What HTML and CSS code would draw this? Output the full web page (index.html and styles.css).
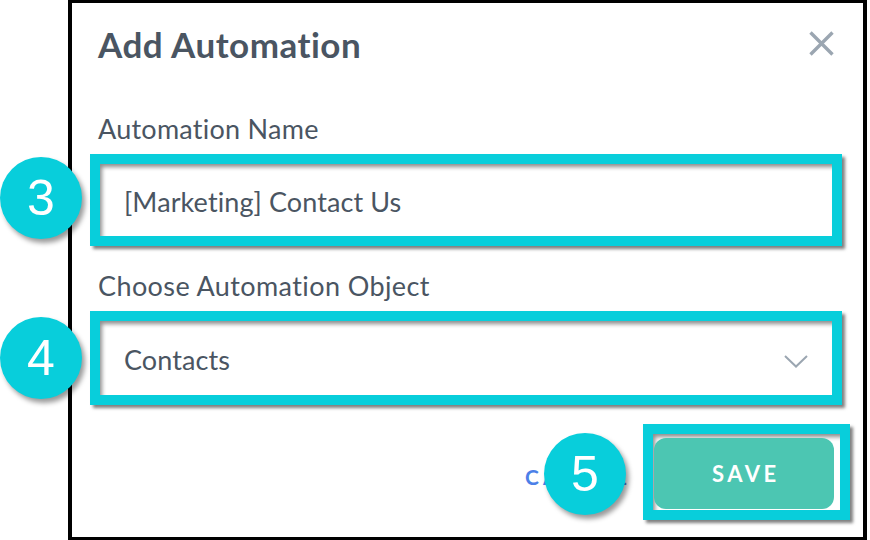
FILE: index.html
```html
<!DOCTYPE html>
<html>
<head>
<meta charset="utf-8">
<link rel="stylesheet" href="styles.css">
</head>
<body>
<div class="frame">
  <div class="head">
    <h1 class="title">Add Automation</h1>
    <svg class="close" width="25" height="25" viewBox="0 0 25 25"><path d="M1.5 1.5 L23.5 23.5 M23.5 1.5 L1.5 23.5" stroke="#9ba6b1" stroke-width="3.4" fill="none"/></svg>
  </div>
  <div class="label">Automation Name</div>
  <div class="hl hl-1"><div class="field">[Marketing] Contact Us</div></div>
  <div class="label label-2">Choose Automation Object</div>
  <div class="hl hl-2"><div class="field select"><span>Contacts</span><svg class="chev" width="24" height="13" viewBox="0 0 24 13"><path d="M1 1 L12 11.5 L23 1" stroke="#9ba6b1" stroke-width="2" fill="none"/></svg></div></div>
  <div class="footer">
    <span class="cancel">CANCEL</span>
    <div class="hl hl-save"><div class="save">SAVE</div></div>
  </div>
</div>
<div class="badge b3">3</div>
<div class="badge b4">4</div>
<div class="badge b5">5</div>
</body>
</html>
```
FILE: styles.css
```css
html, body {
  margin: 0;
  background: #fff;
}
body {
  width: 870px;
  height: 540px;
  overflow: hidden;
  position: relative;
  font-family: Lato, "Open Sans", sans-serif;
  color: #4a5562;
}
.frame {
  margin-left: 68px;
  width: 799px;
  height: 540px;
  box-sizing: border-box;
  border-style: solid;
  border-color: #000;
  border-width: 3px 4px;
  padding: 21px 21px 0 18px;
}
.head {
  display: flex;
  justify-content: space-between;
  align-items: flex-start;
  height: 40px;
  padding-left: 8px;
}
.title {
  margin: 0;
  font-size: 35px;
  line-height: 40px;
  font-weight: 700;
  letter-spacing: 0.5px;
  color: #4a5562;
}
.close {
  margin-top: 7px;
  margin-right: 8px;
}
.label {
  margin-top: 49px;
  padding-left: 8px;
  font-size: 27px;
  line-height: 32px;
  height: 32px;
  letter-spacing: 0.25px;
}
.label-2 {
  margin-top: 24px;
  letter-spacing: 0.4px;
}
.hl {
  margin-top: 9px;
  border: 10px solid #08cedb;
  background: #fff;
  box-shadow: 3px 3px 3px rgba(0, 0, 0, 0.5);
}
.field {
  height: 72px;
  box-sizing: border-box;
  padding: 22px 24px 0 24px;
  font-size: 27px;
  line-height: 32px;
  letter-spacing: 0.1px;
  box-shadow: inset 3px 4px 4px -1px rgba(0, 0, 0, 0.45);
}
.hl-2 .field {
  height: 74px;
  padding-top: 23px;
}
.select {
  display: flex;
  justify-content: space-between;
  align-items: flex-start;
}
.chev {
  margin-top: 11px;
}
.footer {
  margin-top: 19px;
  margin-right: -8px;
  display: flex;
  justify-content: flex-end;
  align-items: center;
}
.cancel {
  width: 118px;
  margin-top: 10px;
  font-size: 21px;
  line-height: 24px;
  font-weight: 700;
  letter-spacing: 4px;
  color: #4c80e8;
  white-space: nowrap;
  overflow: hidden;
}
.hl-save {
  margin-top: 0;
  width: 187px;
  height: 76px;
  box-sizing: content-box;
  padding: 0;
  box-shadow: 3px 3px 3px rgba(0, 0, 0, 0.5), inset 3px 4px 4px -1px rgba(0, 0, 0, 0.45);
  display: flex;
  align-items: flex-start;
}
.save {
  margin: 4px 0 0 1px;
  width: 180px;
  height: 71px;
  border-radius: 12px;
  background: #4cc6b2;
  color: #fff;
  font-size: 22px;
  font-weight: 700;
  letter-spacing: 3.5px;
  text-indent: 3.5px;
  display: flex;
  align-items: center;
  justify-content: center;
}
.badge {
  position: absolute;
  width: 82px;
  height: 82px;
  border-radius: 50%;
  background: #08cedb;
  color: #fff;
  font-family: "Liberation Sans", Arial, sans-serif;
  font-size: 50px;
  display: flex;
  align-items: center;
  justify-content: center;
  box-shadow: 3px 4px 5px rgba(0, 0, 0, 0.4);
}
.b3 { left: 0; top: 157px; }
.b4 { left: 0; top: 317px; }
.b5 { left: 544px; top: 433px; }
```
